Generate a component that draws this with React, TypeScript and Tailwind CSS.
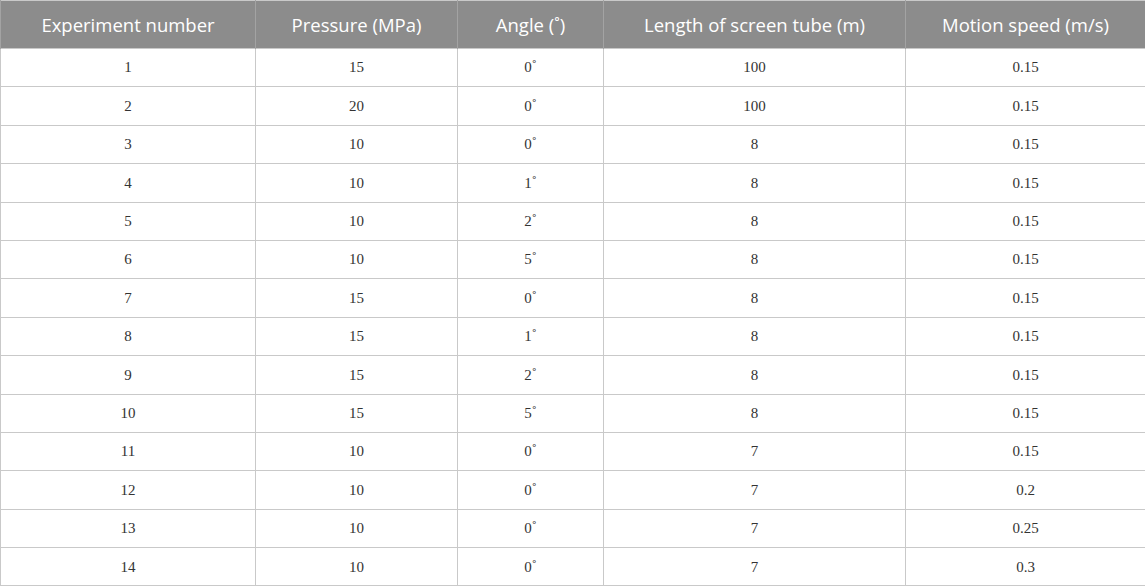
const headers = [
  "Experiment number",
  "Pressure (MPa)",
  "Angle (˚)",
  "Length of screen tube (m)",
  "Motion speed (m/s)",
];

const rows: [number, number, string, number, string][] = [
  [1, 15, "0", 100, "0.15"],
  [2, 20, "0", 100, "0.15"],
  [3, 10, "0", 8, "0.15"],
  [4, 10, "1", 8, "0.15"],
  [5, 10, "2", 8, "0.15"],
  [6, 10, "5", 8, "0.15"],
  [7, 15, "0", 8, "0.15"],
  [8, 15, "1", 8, "0.15"],
  [9, 15, "2", 8, "0.15"],
  [10, 15, "5", 8, "0.15"],
  [11, 10, "0", 7, "0.15"],
  [12, 10, "0", 7, "0.2"],
  [13, 10, "0", 7, "0.25"],
  [14, 10, "0", 7, "0.3"],
];

const cell =
  "p-0 border-[1.5px] border-[#c9c9c9] text-center text-[15px] text-[#333] font-['Liberation_Serif',serif]";

const App = () => {
  return (
    <div className="w-[1145px] h-[587px] bg-white overflow-hidden">
      <table className="w-[1145px] table-fixed border-collapse border-[1.5px] border-[#c9c9c9]">
        <colgroup>
          <col className="w-[255px]" />
          <col className="w-[202px]" />
          <col className="w-[146px]" />
          <col className="w-[302px]" />
          <col className="w-[240px]" />
        </colgroup>
        <thead>
          <tr className="bg-[#8c8c8c]">
            {headers.map((h) => (
              <th
                key={h}
                className="h-[48px] p-0 border-x-[1.5px] border-[#a3a3a3] text-white font-normal text-[18.5px] text-center font-['Open_Sans',sans-serif]"
              >
                {h}
              </th>
            ))}
          </tr>
        </thead>
        <tbody>
          {rows.map(([n, p, a, l, s]) => (
            <tr key={n} className="h-[38.4px]">
              <td className={cell}>{n}</td>
              <td className={cell}>{p}</td>
              <td className={cell}>
                {a}
                <span className="relative -top-[1px] text-[15px]">˚</span>
              </td>
              <td className={cell}>{l}</td>
              <td className={cell}>{s}</td>
            </tr>
          ))}
        </tbody>
      </table>
    </div>
  );
};

export default App;
